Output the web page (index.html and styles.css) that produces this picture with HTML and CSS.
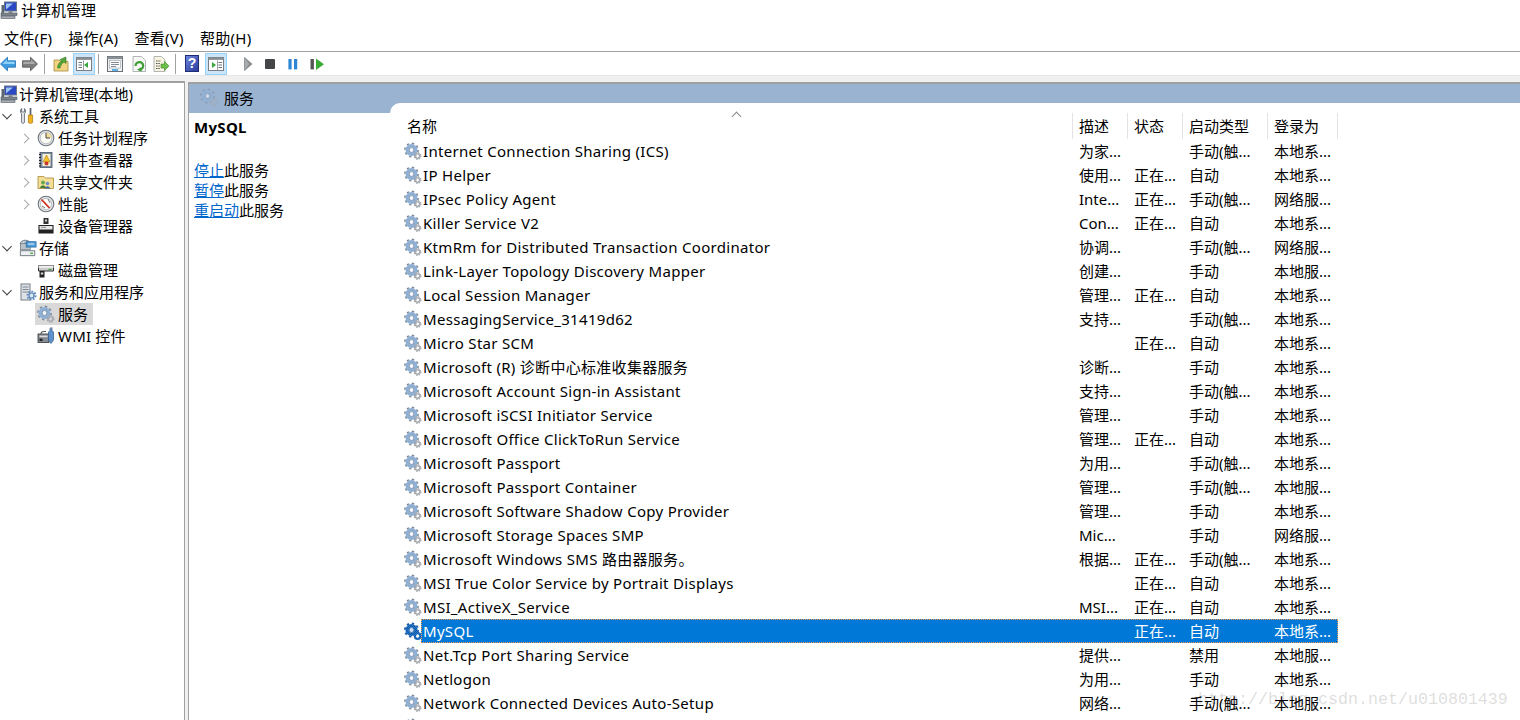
FILE: index.html
```html
<!DOCTYPE html>
<html lang="zh-CN">
<head>
<meta charset="utf-8">
<title>计算机管理</title>
<link rel="stylesheet" href="styles.css">
</head>
<body>
<svg class="defs" width="0" height="0" aria-hidden="true">
  <defs>
    <pattern id="dither" width="2" height="2" patternUnits="userSpaceOnUse">
      <rect width="2" height="2" fill="#2a78c8"/>
      <rect width="1" height="1" fill="#0a55a8"/>
      <rect x="1" y="1" width="1" height="1" fill="#0a55a8"/>
    </pattern>
    <symbol id="gear" viewBox="0 0 18 18">
      <circle cx="7.5" cy="8" r="6.6" fill="none" stroke="#7d8a9a" stroke-width="1.6" stroke-dasharray="2.4 2.8"/>
      <circle cx="7.5" cy="8" r="4.4" fill="none" stroke="#8fb0d4" stroke-width="3.2"/>
      <circle cx="7.5" cy="8" r="2.5" fill="#f2f6fb" stroke="#5f7d9f" stroke-width=".8"/>
      <circle cx="13.6" cy="14" r="3.3" fill="none" stroke="#9a9fa6" stroke-width="1.2" stroke-dasharray="1.4 1.2"/>
      <circle cx="13.6" cy="14" r="2.2" fill="none" stroke="#a8adb4" stroke-width="1.6"/>
    </symbol>
    <symbol id="gear-sel" viewBox="0 0 18 18">
      <circle cx="7.5" cy="8" r="6.6" fill="none" stroke="#1d5fa8" stroke-width="1.8" stroke-dasharray="2.4 2.8"/>
      <circle cx="7.5" cy="8" r="4.4" fill="none" stroke="url(#dither)" stroke-width="3.4"/>
      <circle cx="7.5" cy="8" r="2.5" fill="#cfe0f2" stroke="#0a55a8" stroke-width=".8"/>
      <circle cx="13.6" cy="14" r="2.8" fill="none" stroke="url(#dither)" stroke-width="2.2"/>
    </symbol>
    <symbol id="computer" viewBox="0 0 18 18">
      <rect x="4.5" y="1" width="12" height="9" fill="#2b49c4" stroke="#6b7785"/>
      <path d="M6 8.5 L6 2.5 L13 2.5 Z" fill="#9ec3f2"/>
      <rect x="8.5" y="10" width="4" height="2" fill="#8e949c"/>
      <rect x="1" y="12" width="16" height="2.5" fill="#7d858e" stroke="#4d545c" stroke-width=".6"/>
      <rect x="1" y="15" width="14" height="2.4" fill="#a8aeb5" stroke="#4d545c" stroke-width=".6"/>
      <rect x="1.5" y="4" width="2.5" height="8" fill="#5a6670"/>
    </symbol>
    <symbol id="tools" viewBox="0 0 18 18">
      <path d="M2.6 1.5 V5 H5.4 V1.5 C7 2.5 7 6 5.4 6.8 V15.5 Q4 17.3 2.6 15.5 V6.8 C1 6 1 2.5 2.6 1.5Z" fill="#eceff2" stroke="#5e6670" stroke-width=".9"/>
      <rect x="10.6" y="1" width="1.8" height="7" fill="#5f6770"/>
      <path d="M9.4 8 H13.6 V15.5 Q11.5 17.6 9.4 15.5Z" fill="#f0b21d" stroke="#a8740e" stroke-width=".7"/>
    </symbol>
    <symbol id="clock" viewBox="0 0 18 18">
      <circle cx="9" cy="9" r="7.8" fill="#dfe3e8" stroke="#6f757c" stroke-width="1.1"/>
      <circle cx="9" cy="9" r="5.8" fill="#fbfaf3" stroke="#9ca2a9" stroke-width=".6"/>
      <path d="M9 9 V3.4 A5.6 5.6 0 0 1 14.6 9Z" fill="#f2dc9e"/>
      <path d="M9 4 V9 H13" fill="none" stroke="#444" stroke-width="1"/>
    </symbol>
    <symbol id="log" viewBox="0 0 18 18">
      <rect x="3" y="1.5" width="12" height="15" fill="#7b8ba0" stroke="#4b5668" stroke-width=".8"/>
      <rect x="5.5" y="3" width="8" height="12" fill="#f7f0d8"/>
      <path d="M3 3v1M3 6v1M3 9v1M3 12v1M3 14.5v1" stroke="#222" stroke-width="2"/>
      <path d="M9.5 4 L13 11 H6Z" fill="#f4c32a" stroke="#a8740e" stroke-width=".6"/>
      <circle cx="9.5" cy="12.6" r="2" fill="#c8372c"/>
    </symbol>
    <symbol id="share" viewBox="0 0 18 18">
      <path d="M1 3.5 H7 L8.5 5 H16.5 V15.5 H1Z" fill="#f3dd97" stroke="#b09545" stroke-width=".9"/>
      <circle cx="6" cy="9.5" r="2" fill="#6aa84f"/>
      <path d="M2.5 15 Q6 9.5 9.5 15Z" fill="#3f7f3a"/>
      <circle cx="10.5" cy="10.5" r="1.8" fill="#6a8fc8"/>
      <path d="M7.6 15.5 Q10.5 11 13.4 15.5Z" fill="#3f63a8"/>
    </symbol>
    <symbol id="perf" viewBox="0 0 18 18">
      <circle cx="9" cy="9" r="7.8" fill="#e4e6e8" stroke="#6f757c" stroke-width="1.1"/>
      <circle cx="9" cy="9" r="5.6" fill="#fdfdfa" stroke="#9ca2a9" stroke-width=".6"/>
      <path d="M4.5 4.5 L12.5 13" stroke="#d22b1f" stroke-width="1.8"/>
      <path d="M11 4 L13 8 M5 11 L8 13" stroke="#666" stroke-width=".9"/>
    </symbol>
    <symbol id="device" viewBox="0 0 18 18">
      <rect x="6.5" y="1" width="5" height="6" fill="#333"/>
      <rect x="8" y="2.5" width="2" height="2" fill="#d6d6d6"/>
      <path d="M2 8.5 H16 V16 H2Z" fill="#e8e8e8" stroke="#222" stroke-width="1.1"/>
      <rect x="2" y="12.5" width="14" height="3.5" fill="#222"/>
      <rect x="4" y="9.8" width="5" height="1.2" fill="#9a9a9a"/>
    </symbol>
    <symbol id="storage" viewBox="0 0 20 20">
      <ellipse cx="7" cy="5" rx="5.5" ry="3.6" fill="#c9d0d6" stroke="#66707a"/>
      <circle cx="7" cy="5" r="1.4" fill="#6aa0c8"/>
      <rect x="1.5" y="5" width="11" height="7" fill="#b9c1c9" stroke="#66707a" stroke-width=".7"/>
      <rect x="8" y="3" width="11" height="6" fill="#4c9bd8" stroke="#2a6a9c" stroke-width=".8"/>
      <rect x="10" y="5" width="7" height="1.2" fill="#d7ecfa"/>
      <path d="M1.5 13 H17.5 V18.5 H1.5Z" fill="#eef0f2" stroke="#66707a"/>
      <rect x="12.5" y="15" width="3" height="1.8" fill="#5fae4b"/>
    </symbol>
    <symbol id="disk" viewBox="0 0 18 18">
      <path d="M1.5 4.5 H16.5 V10 H1.5Z" fill="#c9c9c9" stroke="#333"/>
      <rect x="1.5" y="4.5" width="15" height="2.4" fill="#eee"/>
      <rect x="11.5" y="7.8" width="3" height="1.2" fill="#3fae3f"/>
      <rect x="2.5" y="10" width="5" height="6.5" fill="#222"/>
      <rect x="3.8" y="11.5" width="2.4" height="2" fill="#ddd"/>
    </symbol>
    <symbol id="server" viewBox="0 0 18 18">
      <rect x="2" y="1" width="9" height="16" fill="#dfe2e6" stroke="#76808a"/>
      <path d="M3.5 4 H9.5 M3.5 6.5 H9.5 M3.5 9 H9.5" stroke="#7d8792" stroke-width="1.1"/>
      <circle cx="12.5" cy="12.5" r="4.2" fill="none" stroke="#5d88b9" stroke-width="1.6" stroke-dasharray="1.8 1.4"/>
      <circle cx="12.5" cy="12.5" r="2.6" fill="#dbe6f2" stroke="#5d88b9" stroke-width="1.4"/>
    </symbol>
    <symbol id="wmi" viewBox="0 0 18 18">
      <rect x="1" y="7" width="11" height="8.5" fill="#858c94" stroke="#333" stroke-width=".8"/>
      <rect x="2.5" y="8.6" width="8" height="1.6" fill="#ddd"/>
      <rect x="2.5" y="11.6" width="3" height="2.4" fill="#222"/>
      <path d="M4 7 Q4 4.5 6.5 4.5 H9" fill="none" stroke="#555" stroke-width="1.1"/>
      <path d="M13 3.4 V1 H15 V3.4 L16.5 5 V13 L14 16.5 L11.5 13 V5Z" fill="#5e92cc" stroke="#2f5d91" stroke-width=".7"/>
      <path d="M13 1.5 L15.5 .8" stroke="#999"/>
    </symbol>
    <symbol id="back" viewBox="0 0 16 16">
      <path d="M.5 8 L7.5 1.2 V4.8 H15.5 V11.2 H7.5 V14.8Z" fill="#3f9bdf" stroke="#1e6fb0" stroke-width=".8"/>
      <path d="M2.5 8 L7 3.6 V5.8 H14.6 V8Z" fill="#8fd0f7"/>
    </symbol>
    <symbol id="forward" viewBox="0 0 16 16">
      <path d="M15.5 8 L8.5 1.2 V4.8 H.5 V11.2 H8.5 V14.8Z" fill="#7d7d7d" stroke="#555" stroke-width=".8"/>
      <path d="M13.5 8 L9 3.6 V5.8 H1.4 V8Z" fill="#aaa"/>
    </symbol>
    <symbol id="up" viewBox="0 0 16 16">
      <path d="M1 4 H6 L7.5 5.5 H15 V15 H1Z" fill="#f1d483" stroke="#a98a3c" stroke-width=".8"/>
      <path d="M4.5 12 Q5 6.5 8.5 5.5 L7 3.5 L13 1 L13 7.5 L11 6 Q8 7.5 7 12Z" fill="#57a53a" stroke="#2f7a22" stroke-width=".6"/>
    </symbol>
    <symbol id="pane-left" viewBox="0 0 16 14">
      <rect x=".5" y=".5" width="15" height="13" fill="#fff" stroke="#7a7f85"/>
      <rect x=".5" y=".5" width="15" height="2.4" fill="#8a8f95"/>
      <path d="M2.5 5.5H6M2.5 8H6M2.5 10.5H6" stroke="#6a6f75" stroke-width="1.2"/>
      <path d="M8 8 L12 5 V11Z" fill="#39a53a"/>
      <path d="M7.5 3.5V13" stroke="#9a9fa5"/>
    </symbol>
    <symbol id="pane-right" viewBox="0 0 16 14">
      <rect x=".5" y=".5" width="15" height="13" fill="#fff" stroke="#7a7f85"/>
      <rect x=".5" y=".5" width="15" height="2.4" fill="#8a8f95"/>
      <path d="M10.5 5.5H14M10.5 8H14M10.5 10.5H14" stroke="#6a6f75" stroke-width="1.2"/>
      <path d="M4 5 L8 8 L4 11Z" fill="#39a53a"/>
      <path d="M9.5 3.5V13" stroke="#9a9fa5"/>
    </symbol>
    <symbol id="props" viewBox="0 0 16 16">
      <rect x=".5" y=".5" width="15" height="15" fill="#f0f1f2" stroke="#6a6f75"/>
      <rect x=".5" y=".5" width="15" height="2.6" fill="#8a9097"/>
      <rect x="2.5" y="4.5" width="11" height="7.5" fill="#fff" stroke="#9aa0a6" stroke-width=".6"/>
      <path d="M4 6.5H12M4 8.5H12M4 10.5H9" stroke="#7b8189" stroke-width=".9"/>
      <rect x="5" y="13.2" width="6" height="1.6" fill="#3aa0e0"/>
    </symbol>
    <symbol id="refresh" viewBox="0 0 16 16">
      <path d="M2 .5 H10.5 L14.5 4.5 V15.5 H2Z" fill="#f7f7f5" stroke="#a0a4a8" stroke-width=".8"/>
      <path d="M4.6 10 A3.8 3.8 0 1 1 9 13.6" fill="none" stroke="#3c9e33" stroke-width="2.2"/>
      <path d="M6 13.8 L10.5 11 L10.6 15.8Z" fill="#3c9e33"/>
    </symbol>
    <symbol id="export" viewBox="0 0 16 16">
      <path d="M1 .5 H8.5 L12 4 V15.5 H1Z" fill="#f8f4df" stroke="#a0a4a8" stroke-width=".8"/>
      <path d="M3 5H8M3 7.5H7M3 10H7M3 12.5H7" stroke="#555" stroke-width="1" stroke-dasharray="1.5 .8"/>
      <path d="M8 8 H11.5 V5.5 L16 10 L11.5 14.5 V12 H8Z" fill="#6cc04a" stroke="#3a8a2a" stroke-width=".6"/>
    </symbol>
    <symbol id="play" viewBox="0 0 16 16"><path d="M4.5 1.5 L12 8 L4.5 14.5Z" fill="#8b8f93" stroke="#6d7074" stroke-width=".6"/><path d="M4.8 2 L9 8 L4.8 14" fill="#a9acaf"/></symbol>
    <symbol id="stop" viewBox="0 0 16 16"><rect x="3" y="3" width="10" height="10" rx="1" fill="#444648"/></symbol>
    <symbol id="pause" viewBox="0 0 16 16"><rect x="3.4" y="3" width="3.2" height="10.4" fill="#2f86d2"/><rect x="9" y="3" width="3.2" height="10.4" fill="#2f86d2"/></symbol>
    <symbol id="resume" viewBox="0 0 16 16"><rect x="1.5" y="3" width="3.4" height="10.4" fill="#555"/><path d="M7 2.4 L15 8.2 L7 14Z" fill="#3cab35"/></symbol>
  </defs>
</svg>

<div class="window">
  <header class="titlebar">
    <svg class="icon-18"><use href="#computer"/></svg>
    <span>计算机管理</span>
  </header>

  <nav class="menubar">
    <span class="menu">文件(F)</span>
    <span class="menu">操作(A)</span>
    <span class="menu">查看(V)</span>
    <span class="menu">帮助(H)</span>
  </nav>

  <div class="toolbar">
    <span class="tool narrow"><svg class="icon-16"><use href="#back"/></svg></span>
    <span class="tool narrow g6"><svg class="icon-16"><use href="#forward"/></svg></span>
    <span class="sep first"></span>
    <span class="tool"><svg class="icon-16"><use href="#up"/></svg></span>
    <span class="tool active g1"><svg class="icon-pane"><use href="#pane-left"/></svg></span>
    <span class="sep"></span>
    <span class="tool"><svg class="icon-16"><use href="#props"/></svg></span>
    <span class="tool g2"><svg class="icon-16"><use href="#refresh"/></svg></span>
    <span class="tool"><svg class="icon-16"><use href="#export"/></svg></span>
    <span class="sep"></span>
    <span class="tool"><span class="help">?</span></span>
    <span class="tool active g2"><svg class="icon-pane"><use href="#pane-right"/></svg></span>
    <span class="tool g10"><svg class="icon-16"><use href="#play"/></svg></span>
    <span class="tool"><svg class="icon-16"><use href="#stop"/></svg></span>
    <span class="tool g1"><svg class="icon-16"><use href="#pause"/></svg></span>
    <span class="tool g2"><svg class="icon-16"><use href="#resume"/></svg></span>
  </div>

  <main class="workspace">
    <aside class="tree">
      <div class="node lv0"><svg class="icon-18"><use href="#computer"/></svg><span>计算机管理(本地)</span></div>
      <div class="node lv1"><i class="chev open"></i><svg class="icon-18"><use href="#tools"/></svg><span>系统工具</span></div>
      <div class="node lv2"><i class="chev"></i><svg class="icon-18"><use href="#clock"/></svg><span>任务计划程序</span></div>
      <div class="node lv2"><i class="chev"></i><svg class="icon-18"><use href="#log"/></svg><span>事件查看器</span></div>
      <div class="node lv2"><i class="chev"></i><svg class="icon-18"><use href="#share"/></svg><span>共享文件夹</span></div>
      <div class="node lv2"><i class="chev"></i><svg class="icon-18"><use href="#perf"/></svg><span>性能</span></div>
      <div class="node lv2"><i class="chev none"></i><svg class="icon-18"><use href="#device"/></svg><span>设备管理器</span></div>
      <div class="node lv1"><i class="chev open"></i><svg class="icon-18"><use href="#storage"/></svg><span>存储</span></div>
      <div class="node lv2"><i class="chev none"></i><svg class="icon-18"><use href="#disk"/></svg><span>磁盘管理</span></div>
      <div class="node lv1"><i class="chev open"></i><svg class="icon-18"><use href="#server"/></svg><span>服务和应用程序</span></div>
      <div class="node lv2"><i class="chev none"></i><div class="picked"><svg class="icon-18"><use href="#gear"/></svg><span>服务</span></div></div>
      <div class="node lv2"><i class="chev none"></i><svg class="icon-18"><use href="#wmi"/></svg><span class="wide">WMI 控件</span></div>
    </aside>

    <section class="pane">
      <div class="actions">
        <div class="band"><svg class="icon-18 band-icon"><use href="#gear"/></svg><span>服务</span></div>
        <div class="actions-body">
          <h2 class="svc-name">MySQL</h2>
          <p class="svc-link"><a href="#">停止</a>此服务</p>
          <p class="svc-link"><a href="#">暂停</a>此服务</p>
          <p class="svc-link"><a href="#">重启动</a>此服务</p>
        </div>
      </div>

      <div class="listwrap">
        <div class="list">
          <div class="head">
            <span class="hname">名称<i class="sort"></i></span><span>描述</span><span>状态</span><span>启动类型</span><span>登录为</span>
          </div>
          <div class="row"><svg class="gear"><use href="#gear"/></svg><div class="cells"><span>Internet Connection Sharing (ICS)</span><span>为家...</span><span></span><span>手动(触...</span><span>本地系...</span></div></div>
          <div class="row"><svg class="gear"><use href="#gear"/></svg><div class="cells"><span>IP Helper</span><span>使用...</span><span>正在...</span><span>自动</span><span>本地系...</span></div></div>
          <div class="row"><svg class="gear"><use href="#gear"/></svg><div class="cells"><span>IPsec Policy Agent</span><span>Inte...</span><span>正在...</span><span>手动(触...</span><span>网络服...</span></div></div>
          <div class="row"><svg class="gear"><use href="#gear"/></svg><div class="cells"><span>Killer Service V2</span><span>Con...</span><span>正在...</span><span>自动</span><span>本地系...</span></div></div>
          <div class="row"><svg class="gear"><use href="#gear"/></svg><div class="cells"><span>KtmRm for Distributed Transaction Coordinator</span><span>协调...</span><span></span><span>手动(触...</span><span>网络服...</span></div></div>
          <div class="row"><svg class="gear"><use href="#gear"/></svg><div class="cells"><span>Link-Layer Topology Discovery Mapper</span><span>创建...</span><span></span><span>手动</span><span>本地服...</span></div></div>
          <div class="row"><svg class="gear"><use href="#gear"/></svg><div class="cells"><span>Local Session Manager</span><span>管理...</span><span>正在...</span><span>自动</span><span>本地系...</span></div></div>
          <div class="row"><svg class="gear"><use href="#gear"/></svg><div class="cells"><span>MessagingService_31419d62</span><span>支持...</span><span></span><span>手动(触...</span><span>本地系...</span></div></div>
          <div class="row"><svg class="gear"><use href="#gear"/></svg><div class="cells"><span>Micro Star SCM</span><span></span><span>正在...</span><span>自动</span><span>本地系...</span></div></div>
          <div class="row"><svg class="gear"><use href="#gear"/></svg><div class="cells"><span>Microsoft (R) 诊断中心标准收集器服务</span><span>诊断...</span><span></span><span>手动</span><span>本地系...</span></div></div>
          <div class="row"><svg class="gear"><use href="#gear"/></svg><div class="cells"><span>Microsoft Account Sign-in Assistant</span><span>支持...</span><span></span><span>手动(触...</span><span>本地系...</span></div></div>
          <div class="row"><svg class="gear"><use href="#gear"/></svg><div class="cells"><span>Microsoft iSCSI Initiator Service</span><span>管理...</span><span></span><span>手动</span><span>本地系...</span></div></div>
          <div class="row"><svg class="gear"><use href="#gear"/></svg><div class="cells"><span>Microsoft Office ClickToRun Service</span><span>管理...</span><span>正在...</span><span>自动</span><span>本地系...</span></div></div>
          <div class="row"><svg class="gear"><use href="#gear"/></svg><div class="cells"><span>Microsoft Passport</span><span>为用...</span><span></span><span>手动(触...</span><span>本地系...</span></div></div>
          <div class="row"><svg class="gear"><use href="#gear"/></svg><div class="cells"><span>Microsoft Passport Container</span><span>管理...</span><span></span><span>手动(触...</span><span>本地服...</span></div></div>
          <div class="row"><svg class="gear"><use href="#gear"/></svg><div class="cells"><span>Microsoft Software Shadow Copy Provider</span><span>管理...</span><span></span><span>手动</span><span>本地系...</span></div></div>
          <div class="row"><svg class="gear"><use href="#gear"/></svg><div class="cells"><span>Microsoft Storage Spaces SMP</span><span>Mic...</span><span></span><span>手动</span><span>网络服...</span></div></div>
          <div class="row"><svg class="gear"><use href="#gear"/></svg><div class="cells"><span>Microsoft Windows SMS 路由器服务。</span><span>根据...</span><span>正在...</span><span>手动(触...</span><span>本地系...</span></div></div>
          <div class="row"><svg class="gear"><use href="#gear"/></svg><div class="cells"><span>MSI True Color Service by Portrait Displays</span><span></span><span>正在...</span><span>自动</span><span>本地系...</span></div></div>
          <div class="row"><svg class="gear"><use href="#gear"/></svg><div class="cells"><span>MSI_ActiveX_Service</span><span>MSI...</span><span>正在...</span><span>自动</span><span>本地系...</span></div></div>
          <div class="row selected"><svg class="gear"><use href="#gear-sel"/></svg><div class="cells"><span>MySQL</span><span></span><span>正在...</span><span>自动</span><span>本地系...</span></div></div>
          <div class="row"><svg class="gear"><use href="#gear"/></svg><div class="cells"><span>Net.Tcp Port Sharing Service</span><span>提供...</span><span></span><span>禁用</span><span>本地服...</span></div></div>
          <div class="row"><svg class="gear"><use href="#gear"/></svg><div class="cells"><span>Netlogon</span><span>为用...</span><span></span><span>手动</span><span>本地系...</span></div></div>
          <div class="row"><svg class="gear"><use href="#gear"/></svg><div class="cells"><span>Network Connected Devices Auto-Setup</span><span>网络...</span><span></span><span>手动(触...</span><span>本地服...</span></div></div>
          <div class="row"><svg class="gear"><use href="#gear"/></svg><div class="cells"><span></span><span></span><span></span><span></span><span></span></div></div>
        </div>
      </div>
    </section>
  </main>
  <div class="watermark">http://blog.csdn.net/u010801439</div>
</div>
</body>
</html>
```

FILE: styles.css
```css
* { box-sizing: border-box; }
html, body { margin: 0; height: 100%; overflow: hidden; }
body {
  font-family: "Noto Sans", "Noto Sans CJK SC", sans-serif;
  font-size: 15px;
  color: #000;
  background: #fff;
}
.defs { display: block; height: 0; }
svg { display: block; flex: none; }
.icon-18 { width: 18px; height: 18px; }
.icon-16 { width: 16px; height: 16px; }
.icon-pane { width: 16px; height: 14px; }

.window {
  position: relative;
  height: 720px;
  display: flex;
  flex-direction: column;
  overflow: hidden;
}

.titlebar {
  height: 26px;
  display: flex;
  align-items: center;
  gap: 3px;
  padding-bottom: 7px;
  line-height: 20px;
}
.menubar {
  height: 26px;
  display: flex;
  gap: 16px;
  padding-left: 4px;
  padding-bottom: 1px;
  align-items: center;
  border-bottom: 1px solid #a0a0a0;
}
.menu { line-height: 20px; letter-spacing: .3px; }

.toolbar {
  height: 24px;
  display: flex;
  align-items: center;
  background: #fff;
  border-bottom: 1px solid #e6e6e6;
}
.tool {
  width: 22px;
  height: 22px;
  flex: none;
  display: flex;
  align-items: center;
  justify-content: center;
  border: 1px solid transparent;
}
.tool.narrow { width: 16px; border: 0; }
.g1 { margin-left: 1px; }
.g2 { margin-left: 2px; }
.g6 { margin-left: 6px; }
.g10 { margin-left: 10px; }
.tool.active { background: #cce4f7; border-color: #99d1ff; }
.sep { width: 1px; height: 20px; flex: none; background: #a0a0a0; margin: 0 5px 0 3px; }
.sep.first { margin-left: 6px; }
.help {
  width: 14px;
  height: 17px;
  background: linear-gradient(135deg, #6f86dc, #2a3c9c);
  border: 1px solid #1f2b72;
  color: #fff;
  font: bold 14px/15px "Liberation Sans", sans-serif;
  text-align: center;
}

.workspace {
  flex: 1;
  min-height: 0;
  display: flex;
  gap: 3px;
  background: #f0f0f0;
  padding-top: 5px;
}
.tree {
  width: 185px;
  flex: none;
  background: #fff;
  border-top: 2px solid #a0a0a0;
  border-right: 1px solid #a0a0a0;
}
.node {
  height: 22px;
  display: flex;
  align-items: center;
  line-height: 22px;
  white-space: nowrap;
}
.lv0 { gap: 1px; }
.lv2 { padding-left: 19px; }
.chev {
  width: 17px;
  height: 22px;
  flex: none;
  display: flex;
  align-items: center;
  justify-content: center;
}
.chev::before {
  content: "";
  width: 6px;
  height: 6px;
  border-top: 1.5px solid #a6a6a6;
  border-right: 1.5px solid #a6a6a6;
  transform: translateX(-3px) rotate(45deg);
}
.chev.open::before {
  border-color: #404040;
  transform: translateX(-2.5px) translateY(-2px) rotate(135deg);
}
.chev.none::before { display: none; }
.chev + svg { margin: 0 3px 0 1px; }
.picked {
  display: flex;
  align-items: center;
  gap: 3px;
  background: #d9d9d9;
  height: 22px;
  margin-left: -1px;
  padding: 0 5px 0 2px;
}
.lv1 .chev { width: 19px; }
.lv1 .chev + svg { margin: 0 2px 0 0; }
.wide { letter-spacing: .2px; }

.pane {
  flex: 1;
  min-width: 0;
  margin-top: 1px;
  display: flex;
  background: #9ab3d1;
  border-top: 2px solid #a0a0a0;
  border-left: 1px solid #a0a0a0;
}
.actions {
  width: 201px;
  flex: none;
  display: flex;
  flex-direction: column;
}
.band {
  height: 29px;
  padding-left: 11px;
  padding-bottom: 2px;
  display: flex;
  align-items: center;
  gap: 6px;
  line-height: 20px;
  flex: none;
}
.band-icon { opacity: .55; margin-bottom: 2px; }
.actions-body {
  flex: 1;
  background: #fff;
  padding: 4px 0 0 5px;
}
.svc-name {
  margin: 0 0 23px;
  font-size: 15px;
  font-weight: 700;
  letter-spacing: .3px;
  line-height: 20px;
}
.svc-link { margin: 0; line-height: 20px; }
.svc-link a { color: #0066cc; text-decoration: underline; }

.listwrap {
  flex: 1;
  min-width: 0;
  padding-top: 19px;
}
.list {
  height: 100%;
  background: #fff;
  border-top-left-radius: 10px;
  padding-top: 10px;
  overflow: hidden;
}
.head {
  display: grid;
  grid-template-columns: 683px 55px 55px 85px 70px;
  height: 26px;
  width: 948px;
}
.head span {
  border-right: 1px solid #e3e3e3;
  padding-left: 6px;
  line-height: 26px;
  white-space: nowrap;
  position: relative;
}
.head .hname { padding-left: 17px; }
.sort {
  position: absolute;
  top: 0;
  left: 343px;
  width: 7px;
  height: 7px;
  border-top: 1px solid #888;
  border-left: 1px solid #888;
  transform: rotate(45deg);
}
.row {
  width: 948px;
  height: 24px;
  display: flex;
  align-items: center;
  padding-left: 14px;
}
.gear { width: 18px; height: 18px; margin-right: -1px; }
.cells {
  flex: 1;
  height: 24px;
  display: grid;
  grid-template-columns: 651px 55px 55px 85px 70px;
  line-height: 24px;
  white-space: nowrap;
  position: relative;
  z-index: 1;
}
.cells span { padding-left: 7px; overflow: hidden; }
.cells span:first-child { padding-left: 2px; letter-spacing: .3px; }
.selected .cells {
  background: #0078d7;
  color: #fff;
  outline: 1px dotted #f0a050;
  outline-offset: -1px;
}

.watermark {
  position: absolute;
  left: 1198px;
  top: 690px;
  width: 322px;
  font: 16.67px/20px "Liberation Mono", monospace;
  color: rgba(150, 150, 150, .32);
  white-space: nowrap;
  pointer-events: none;
}
```
